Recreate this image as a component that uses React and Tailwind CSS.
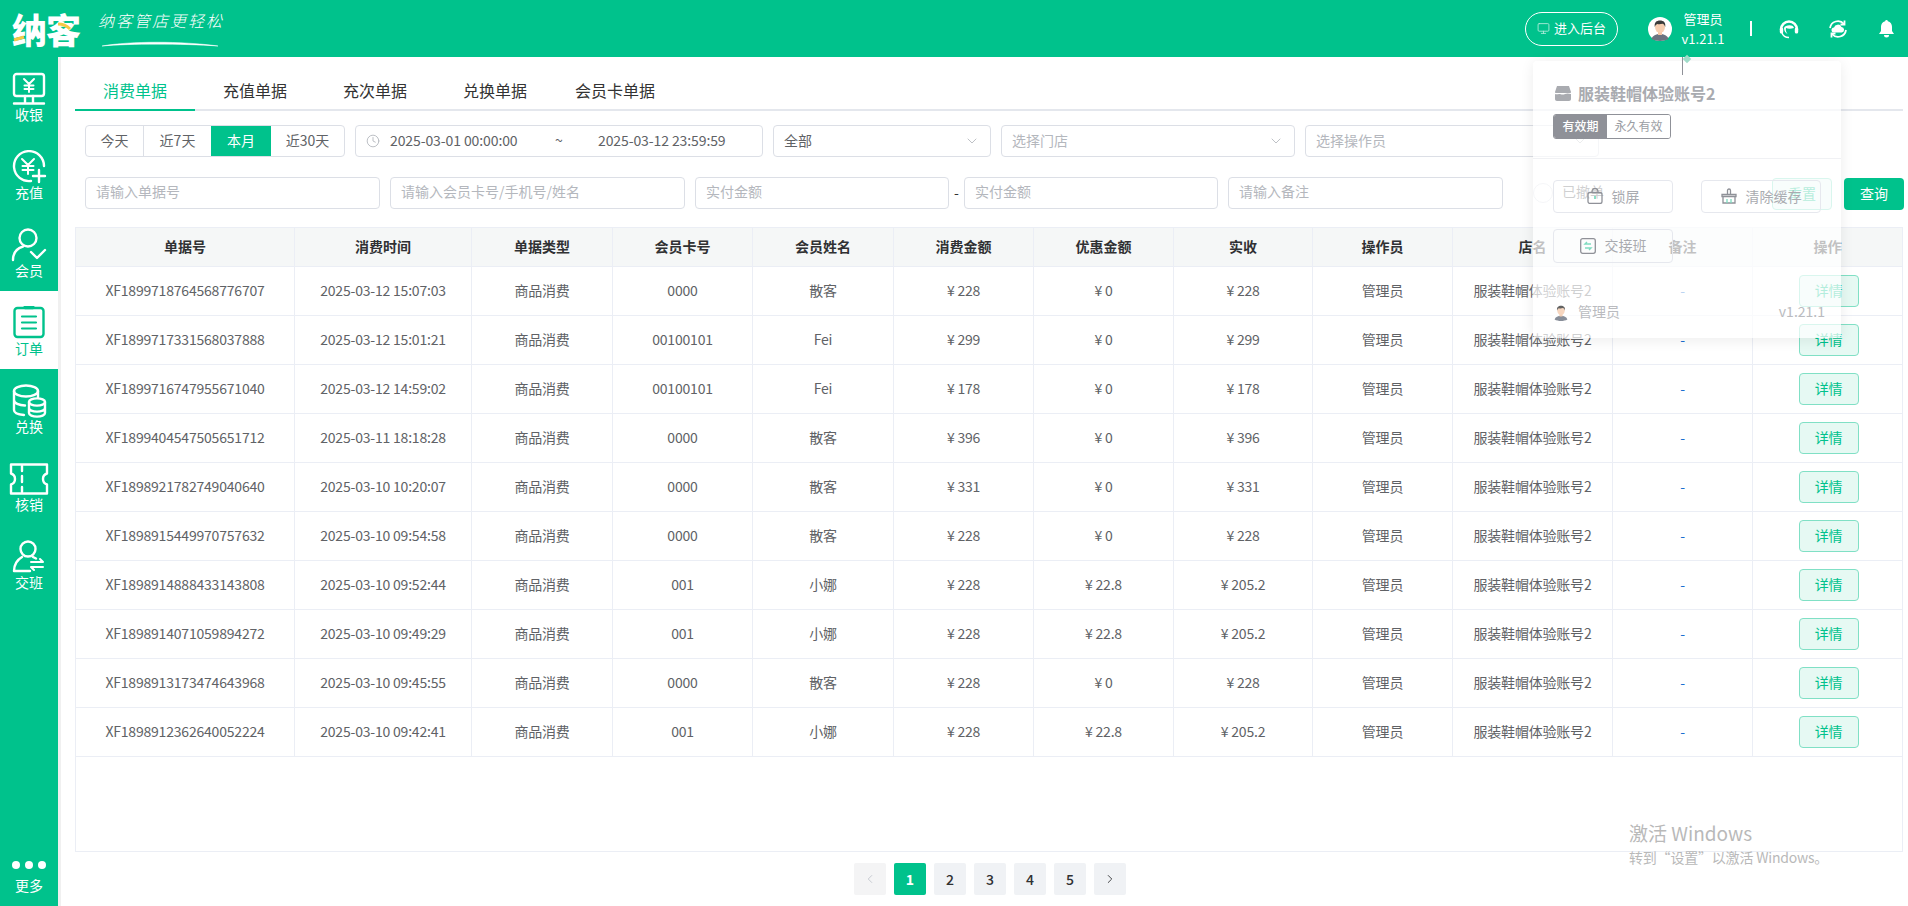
import React from "react";
import { ChevronDown, ChevronLeft, ChevronRight, Clock, Monitor } from "lucide-react";

const navItems = [
  { label: "收银", icon: "cash" },
  { label: "充值", icon: "recharge" },
  { label: "会员", icon: "member" },
  { label: "订单", icon: "order", active: true },
  { label: "兑换", icon: "exchange" },
  { label: "核销", icon: "ticket" },
  { label: "交班", icon: "shift" },
];

const tabs = ["消费单据", "充值单据", "充次单据", "兑换单据", "会员卡单据"];
const ranges = [
  { label: "今天", width: "w-[58px]" },
  { label: "近7天", width: "w-[67px]" },
  { label: "本月", width: "w-[60px]", active: true },
  { label: "近30天", width: "w-[73px]" },
];
const columns = ["单据号", "消费时间", "单据类型", "会员卡号", "会员姓名", "消费金额", "优惠金额", "实收", "操作员", "店名", "备注", "操作"];

const rows = [
  ["XF1899718764568776707", "2025-03-12 15:07:03", "0000", "散客", "228", "0", "228"],
  ["XF1899717331568037888", "2025-03-12 15:01:21", "00100101", "Fei", "299", "0", "299"],
  ["XF1899716747955671040", "2025-03-12 14:59:02", "00100101", "Fei", "178", "0", "178"],
  ["XF1899404547505651712", "2025-03-11 18:18:28", "0000", "散客", "396", "0", "396"],
  ["XF1898921782749040640", "2025-03-10 10:20:07", "0000", "散客", "331", "0", "331"],
  ["XF1898915449970757632", "2025-03-10 09:54:58", "0000", "散客", "228", "0", "228"],
  ["XF1898914888433143808", "2025-03-10 09:52:44", "001", "小娜", "228", "22.8", "205.2"],
  ["XF1898914071059894272", "2025-03-10 09:49:29", "001", "小娜", "228", "22.8", "205.2"],
  ["XF1898913173474643968", "2025-03-10 09:45:55", "0000", "散客", "228", "0", "228"],
  ["XF1898912362640052224", "2025-03-10 09:42:41", "001", "小娜", "228", "22.8", "205.2"],
];

const NavIcon = ({ name }) => {
  const stroke = { fill: "none", stroke: "currentColor", strokeWidth: 2.4, strokeLinecap: "round", strokeLinejoin: "round" };
  if (name === "cash") {
    return (
      <svg width="36" height="34" viewBox="0 0 36 34">
        <rect x="3" y="2" width="30" height="22" rx="2.5" {...stroke} />
        <path d="M13 7l5 5 5-5M18 12v8M13.5 13.5h9M13.5 17h9" {...stroke} strokeWidth="2" />
        <path d="M14 24v6M22 24v6M3 31.5h30" {...stroke} />
      </svg>
    );
  }
  if (name === "recharge") {
    return (
      <svg width="36" height="34" viewBox="0 0 36 34">
        <path d="M33 16A15 15 0 1 0 20 31" {...stroke} />
        <path d="M11 9l6 6 6-6M17 15v9M11.5 16h11M11.5 20h11" {...stroke} strokeWidth="2" />
        <path d="M28 20v12M22 26h12" {...stroke} />
      </svg>
    );
  }
  if (name === "member") {
    return (
      <svg width="36" height="34" viewBox="0 0 36 34">
        <circle cx="17" cy="10" r="8.5" {...stroke} />
        <path d="M2 32c0-8 5-12 10-13.5" {...stroke} />
        <path d="M20 24l6 6 8-8" {...stroke} />
      </svg>
    );
  }
  if (name === "order") {
    return (
      <svg width="36" height="34" viewBox="0 0 36 34">
        <rect x="3.5" y="2" width="29" height="29" rx="3" {...stroke} />
        <path d="M14 1.5h8" {...stroke} strokeWidth="3.4" />
        <path d="M11 10.5h14M11 16.5h14M11 22.5h14" {...stroke} strokeWidth="2.2" />
      </svg>
    );
  }
  if (name === "exchange") {
    return (
      <svg width="36" height="34" viewBox="0 0 36 34">
        <ellipse cx="15" cy="7" rx="12" ry="5.5" {...stroke} />
        <path d="M3 7v19c0 2.5 4 4.500 10 5M3 16c0 3 5 5.500 11 5.500M27 7v6" {...stroke} />
        <ellipse cx="26" cy="18" rx="8" ry="3.6" {...stroke} />
        <path d="M18 18v11c0 2 3.6 3.6 8 3.6s8-1.6 8-3.6V18M18 24c0 2 3.6 3.6 8 3.6s8-1.6 8-3.6" {...stroke} />
      </svg>
    );
  }
  if (name === "ticket") {
    return (
      <svg width="42" height="34" viewBox="0 0 42 34">
        <path d="M3 2.500h36v9c-3 1-4 3-4 5.500s1 4.500 4 5.500v9H3v-9c3-1 4-3 4-5.500s-1-4.500-4-5.500z" {...stroke} />
        <path d="M14 4v5M14 14v6M14 25v5" {...stroke} />
      </svg>
    );
  }
  return (
    <svg width="36" height="34" viewBox="0 0 36 34">
      <circle cx="17" cy="9" r="7.500" {...stroke} />
      <path d="M3 31c0-7 3-11 8-14M22 17l3 1.500M3 31h16" {...stroke} />
      <path d="M20 22h12l-3-3M32 27H20l3 3" {...stroke} strokeWidth="2" />
    </svg>
  );
};

const Avatar = ({ size = 24 }) => (
  <svg width={size} height={size} viewBox="0 0 24 24">
    <circle cx="12" cy="12" r="12" fill="#fff" />
    <path d="M3.500 22c1-3.500 4.500-5 8.500-5s7.500 1.500 8.500 5c-2.300 1.300-5.300 2-8.500 2s-6.200-.7-8.500-2z" fill="#6b7280" />
    <rect x="10" y="13" width="4" height="5" fill="#f3c6a5" />
    <ellipse cx="12" cy="10" rx="5" ry="6" fill="#f6cdb0" />
    <path d="M6.800 10C6 5.500 8.500 3.500 12 3.500s6 2 5.200 6.500c-.6-2-1.500-3-2.700-3.300-2 .6-4 .6-5.200.2C8.200 7.300 7.300 8.300 6.800 10z" fill="#3b3b3b" />
  </svg>
);

const Field = ({ width, children, arrow, muted }) => (
  <div className={`${width} h-8 flex items-center justify-between px-[10px] rounded-[4px] border border-[#dcdfe6] text-[14px] ${muted ? "text-[#b4b7bd]" : "text-[#606266]"}`}>
    <span className="pb-[2px]">{children}</span>
    {arrow && <ChevronDown className="w-[16px] h-[16px] text-[#b4b7bd]" strokeWidth={1.300} />}
  </div>
);

const UserPanel = () => (
  <div className="absolute left-[1533px] top-[61px] w-[308px] h-[277px] rounded-[4px] bg-white/70 shadow-[0_2px_14px_rgba(0,0,0,0.08)] text-[#a9abb0]">
    <div className="px-5 pt-[22px] h-[98px] border-b border-[#f0f1f4]">
      <div className="flex items-center gap-[7px] h-5">
        <svg width="16" height="16" viewBox="0 0 16 16" className="ml-[2px]">
          <path d="M2 1h12l2 6c0 .6-.4 1-1 1H1c-.6 0-1-.4-1-1z" fill="#a9abb0" />
          <path d="M0 9c2 1 3-.5 5 0s3 1 5 0 4-.5 6 0v5c0 1-.8 2-2 2H2c-1.200 0-2-1-2-2z" fill="#a9abb0" />
        </svg>
        <span className="text-[16px] font-bold">服装鞋帽体验账号2</span>
      </div>
      <div className="flex mt-[11px] w-[118px] h-[25px] rounded-[3px] border border-[#8f9198] text-[12px] overflow-hidden">
        <span className="w-[53px] bg-[#8f9198] text-white font-medium flex items-center justify-center pb-[1px]">有效期</span>
        <span className="flex-1 flex items-center justify-center text-[#9a9da3] bg-white pb-[1px]">永久有效</span>
      </div>
    </div>
    <div className="pl-5 pt-[21px]">
      <div className="flex gap-[28px]">
        <div className="w-[120px] h-[33px] rounded-[4px] border border-[#e6e8ee] flex items-center justify-center gap-[9px] text-[14px] pb-[1px]">
          <svg width="16" height="16" viewBox="0 0 16 16" fill="none" stroke="#8f9198" strokeWidth="1.300">
            <rect x="1" y="4.500" width="14" height="11" rx="2" />
            <path d="M5 4.500V3.500a3 3 0 0 1 6 0v1" />
            <path d="M8 8v3" stroke="#7fdcc0" strokeWidth="1.800" />
          </svg>
          锁屏
        </div>
        <div className="w-[120px] h-[33px] rounded-[4px] border border-[#e6e8ee] flex items-center justify-center gap-[9px] text-[14px] pb-[1px]">
          <svg width="16" height="16" viewBox="0 0 16 16" fill="none" stroke="#8f9198" strokeWidth="1.300">
            <path d="M6.500 6V2.500a1.500 1.500 0 0 1 3 0V6M1 6.500h14v2H1zM2 8.500V15h12V8.500" />
            <path d="M6 11v4M10 11v4" stroke="#7fdcc0" />
          </svg>
          清除缓存
        </div>
      </div>
      <div className="mt-4 w-[120px] h-[34px] rounded-[4px] border border-[#e6e8ee] flex items-center justify-center gap-[9px] text-[14px] pb-[1px]">
        <svg width="16" height="16" viewBox="0 0 16 16" fill="none" stroke="#8f9198" strokeWidth="1.300">
          <rect x="0.700" y="0.700" width="14.600" height="14.600" rx="2" />
          <path d="M11 6H5l2-2M5 10h6l-2 2" stroke="#7fdcc0" strokeWidth="1.400" />
        </svg>
        交接班
      </div>
    </div>
    <div className="flex items-center justify-between pl-[19px] pr-4 mt-[38px] opacity-80">
      <div className="flex items-center gap-2 text-[14px]">
        <Avatar size={18} />
        管理员
      </div>
      <span className="text-[14px]">v1.21.1</span>
    </div>
  </div>
);

export default function App() {
  return (
    <div className="relative w-[1908px] h-[906px] overflow-hidden bg-white font-['Noto_Sans_CJK_SC',sans-serif]">
      {/* header */}
      <header className="h-[57px] bg-[#00c28c] flex items-center text-white">
        <div className="relative pl-[12px] w-[96px] h-[50px] flex items-center">
          <span className="text-[35px] leading-[50px] font-black tracking-[-1px]">纳客</span>
          <svg width="72" height="30" viewBox="0 0 72 30" className="absolute left-[12px] top-[10px]" fill="none" stroke="#f6c945" strokeWidth="3">
            <path d="M2 26l10-3M46 10c4 0 8 1 12 5" />
          </svg>
        </div>
        <div className="relative ml-[2px] w-[125px] h-[40px] -mt-[2px]">
          <span className="block text-[16px] leading-[24px] italic font-light tracking-[2px] whitespace-nowrap">纳客管店更轻松</span>
          <svg width="118" height="6" viewBox="0 0 118 6" className="absolute left-[3px] top-[33px]" fill="none">
            <path d="M1 5C30 0 80 0 117 5C80 2.500 30 2.500 1 5z" fill="#fff" stroke="#fff" strokeWidth="0.500" />
          </svg>
        </div>

        <div className="ml-auto flex items-center">
          <div className="w-[93px] h-[34px] rounded-full border border-white flex items-center justify-center gap-[4px] text-[13px] pb-[1px]">
            <Monitor className="w-[13px] h-[13px] opacity-70" strokeWidth={1.600} />
            进入后台
          </div>
          <div className="ml-[30px] mr-[10px]">
            <Avatar />
          </div>
          <div className="flex flex-col items-center text-[13px] leading-[20px] w-[42px]">
            <span>管理员</span>
            <span>v1.21.1</span>
          </div>
          <div className="ml-[26px] w-[2px] h-[15px] bg-white" />
          <svg width="20" height="20" viewBox="0 0 20 20" className="ml-[27px]" fill="none" stroke="#fff">
            <path d="M2 10.500a8 8 0 0 1 16 0" strokeWidth="2.600" />
            <path d="M5 9c1-3 9-4 10 0-3 1-6 1-8 0-.5 2 0 4 1.500 6-2-1-3.500-3-3.500-6z" fill="#fff" stroke="none" />
            <rect x="0.800" y="8.500" width="3.400" height="6" rx="1.600" fill="#fff" stroke="none" />
            <rect x="15.800" y="8.500" width="3.400" height="6" rx="1.600" fill="#fff" stroke="none" />
            <path d="M3 14c1 3 3.500 4.500 7 4.500" strokeWidth="1.400" />
          </svg>
          <svg width="20" height="20" viewBox="0 0 20 20" className="ml-[29px]" fill="none" stroke="#fff" strokeWidth="1.800">
            <path d="M2 9a8 8 0 0 1 14-4M18 11a8 8 0 0 1-14 4" />
            <path d="M16.500 1.500v4h-4M3.500 18.500v-4h4" />
            <path d="M6 13.500a2.500 2.500 0 0 1 0-5 4 4 0 0 1 7.500-.5 2.800 2.800 0 0 1 .5 5.500z" fill="#fff" stroke="none" />
          </svg>
          <svg width="15" height="18" viewBox="0 0 15 18" className="ml-[31px] mr-[14px]" fill="#fff">
            <path d="M7.500 0a1.500 1.500 0 0 1 1.400 1.200C11.500 1.900 13 4 13 6.800V11l2 3H0l2-3V6.800C2 4 3.500 1.900 6.100 1.200A1.500 1.500 0 0 1 7.500 0z" />
            <path d="M5 15h5a2.500 2.500 0 0 1-5 0z" />
          </svg>
        </div>
      </header>

      <div className="flex h-[849px]">
        {/* sidebar */}
        <aside className="w-[58px] bg-[#00c28c] flex flex-col text-white shrink-0">
          {navItems.map((item) => (
            <div
              key={item.label}
              className={`h-[78px] flex flex-col items-center pt-[15px] ${item.active ? "bg-white text-[#00c28c]" : ""}`}
            >
              <div className="h-[34px] flex items-center justify-center">
                <NavIcon name={item.icon} />
              </div>
              <span className="text-[14px] leading-[20px] -mt-[2px]">{item.label}</span>
            </div>
          ))}
          <div className="mt-auto flex flex-col items-center pb-[11px]">
            <div className="flex gap-[5px]">
              <span className="w-2 h-2 rounded-full bg-white" />
              <span className="w-2 h-2 rounded-full bg-white" />
              <span className="w-2 h-2 rounded-full bg-white" />
            </div>
            <span className="text-[14px] leading-[20px] mt-[6px]">更多</span>
          </div>
        </aside>
        <div className="w-[3px] bg-[#f0f0f0] shrink-0" />

        {/* content */}
        <main className="flex-1 pl-[14px] pr-[5px] pt-[14px]">
          <div className="flex h-[40px] border-b-2 border-[#e4e7ed]">
            {tabs.map((tab, i) => (
              <div
                key={tab}
                className={`h-[40px] px-[28px] shrink-0 text-[16px] leading-[38px] ${i === 0 ? "text-[#00c28c] border-b-2 border-[#00c28c]" : "text-[#333]"} ${i === 4 ? "-ml-[8px]" : ""}`}
              >
                {tab}
              </div>
            ))}
          </div>

          <div className="flex items-center mt-[14px] pl-[10px] gap-[10px]">
            <div className="flex h-8 rounded-[4px] border border-[#dcdfe6] overflow-hidden text-[14px] text-[#606266]">
              {ranges.map((r, i) => (
                <div
                  key={r.label}
                  className={`${r.width} flex items-center justify-center pb-[2px] ${r.active ? "bg-[#00c28c] text-white" : ""} ${i === 0 ? "border-r border-[#dcdfe6]" : ""}`}
                >
                  {r.label}
                </div>
              ))}
            </div>
            <div className="w-[408px] h-8 flex items-center rounded-[4px] border border-[#dcdfe6] text-[14px] tracking-[-0.1px] text-[#606266] pl-[10px]">
              <Clock className="w-[14px] h-[14px] text-[#b4b7bd]" strokeWidth={1.500} />
              <span className="ml-[10px] w-[131px] pb-[2px]">2025-03-01 00:00:00</span>
              <span className="ml-[34px] w-[43px] pb-[2px]">~</span>
              <span className="pb-[2px]">2025-03-12 23:59:59</span>
            </div>
            <Field width="w-[218px]" arrow>全部</Field>
            <Field width="w-[294px]" arrow muted>选择门店</Field>
            <Field width="w-[294px]" arrow muted>选择操作员</Field>
          </div>

          <div className="flex items-center mt-[18px] pl-[10px]">
            <Field width="w-[295px]" muted>请输入单据号</Field>
            <div className="w-[10px]" />
            <Field width="w-[295px]" muted>请输入会员卡号/手机号/姓名</Field>
            <div className="w-[10px]" />
            <Field width="w-[254px]" muted>实付金额</Field>
            <span className="w-[15px] text-center text-[14px] text-[#333]">-</span>
            <Field width="w-[254px]" muted>实付金额</Field>
            <div className="w-[10px]" />
            <Field width="w-[275px]" muted>请输入备注</Field>
            <span className="ml-[30px] w-5 h-5 rounded-full border border-[#dcdfe6]" />
            <span className="ml-[9px] text-[14px] text-[#606266] pb-[2px]">已撤单</span>
            <div className="ml-auto -mr-[1px] flex gap-3 pt-[3px]">
              <div className="w-[60px] h-8 rounded-[4px] border border-[#80e0c5] bg-[#e6f9f3] text-[#00c28c] text-[14px] flex items-center justify-center pb-[2px]">重置</div>
              <div className="w-[60px] h-8 rounded-[4px] bg-[#00c28c] text-white text-[14px] flex items-center justify-center pb-[2px]">查询</div>
            </div>
          </div>

          <div className="mt-[17px] h-[625px] border border-[#ebeef5]">
            <div className="grid grid-cols-[219px_177px_141px_140px_141px_140px_140px_139px_140px_160px_140px_1fr] h-[39px] bg-[#f5f7f7] border-b border-[#ebeef5] text-[14px] font-bold text-[#303133]">
              {columns.map((col, i) => (
                <div key={col} className={`flex items-center justify-center pb-[2px] ${i < 11 ? "border-r border-[#ebeef5]" : ""}`}>
                  {col}
                </div>
              ))}
            </div>
            {rows.map((row) => {
              const cells = [row[0], row[1], "商品消费", row[2], row[3], `¥ ${row[4]}`, `¥ ${row[5]}`, `¥ ${row[6]}`, "管理员", "服装鞋帽体验账号2"];
              return (
                <div
                  key={row[0]}
                  className="grid grid-cols-[219px_177px_141px_140px_141px_140px_140px_139px_140px_160px_140px_1fr] h-[49px] border-b border-[#ebeef5] text-[14px] tracking-[-0.2px] text-[#606266]"
                >
                  {cells.map((cell, i) => (
                    <div key={i} className="flex items-center justify-center pb-[2px] border-r border-[#ebeef5] whitespace-nowrap">
                      {cell}
                    </div>
                  ))}
                  <div className="flex items-center justify-center pb-[2px] border-r border-[#ebeef5] text-[#1a6fd0]">-</div>
                  <div className="flex items-center justify-center pl-[2px]">
                    <div className="w-[60px] h-8 rounded-[4px] border border-[#80e0c5] bg-[#e6f9f3] text-[#00c28c] flex items-center justify-center pb-[1px]">详情</div>
                  </div>
                </div>
              );
            })}
          </div>

          <div className="flex justify-center gap-2 mt-[11px] text-[14px] font-medium text-[#303133] pl-[2px]">
            <div className="w-8 h-8 rounded-[2px] bg-[#f4f4f5] flex items-center justify-center text-[#c0c4cc]">
              <ChevronLeft className="w-[14px] h-[14px]" strokeWidth={1.500} />
            </div>
            <div className="w-8 h-8 rounded-[2px] bg-[#00c28c] text-white flex items-center justify-center font-bold">1</div>
            {[2, 3, 4, 5].map((n) => (
              <div key={n} className="w-8 h-8 rounded-[2px] bg-[#f0f2f5] flex items-center justify-center">{n}</div>
            ))}
            <div className="w-8 h-8 rounded-[2px] bg-[#f0f2f5] flex items-center justify-center">
              <ChevronRight className="w-[14px] h-[14px]" strokeWidth={1.500} />
            </div>
          </div>
        </main>
      </div>

      {/* dropdown fading in over the page */}
      <UserPanel />
      <div className="absolute left-[1682px] top-[57px] w-px h-[18px] bg-[#8f9198]" />
      <div className="absolute left-[1684px] top-[56px] w-[6px] h-[6px] rotate-45 bg-[#9fdcc9]" />

      {/* windows activation notice */}
      <div className="absolute left-[1629px] top-[819px] text-[#b9b9b9] pointer-events-none">
        <div className="text-[19px] leading-[28px]">激活 Windows</div>
        <div className="text-[14px] leading-[20px] tracking-[-0.2px]">转到“设置”以激活 Windows。</div>
      </div>
    </div>
  );
}
